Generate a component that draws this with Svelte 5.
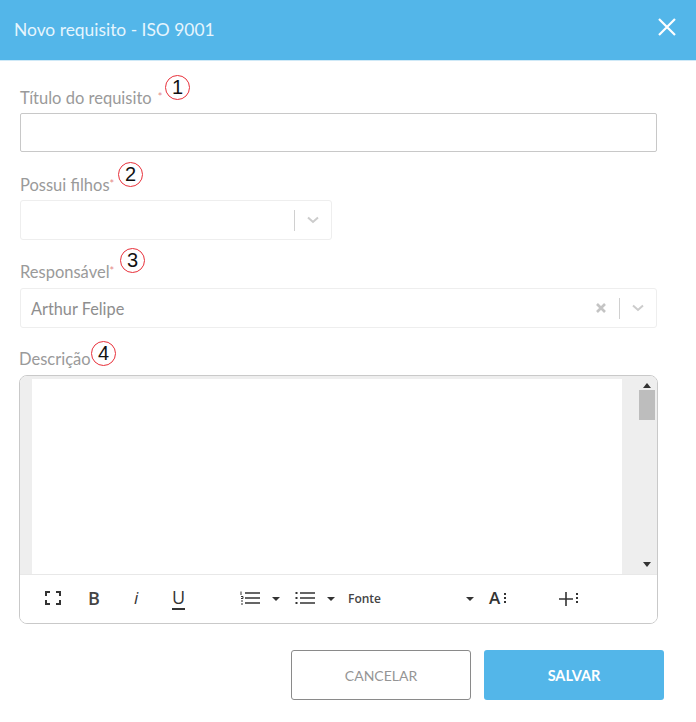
<script>
  let titulo = $state("");
  let numeros = { titulo: 1, filhos: 2, responsavel: 3, descricao: 4 };
</script>

<div class="modal">
  <header class="modal-header">
    <h1>Novo requisito - ISO 9001</h1>
    <svg class="close" width="20" height="20" viewBox="0 0 20 20">
      <path d="M2 2 L18 18 M18 2 L2 18" stroke="#fff" stroke-width="2.2" fill="none" />
    </svg>
  </header>

  <form class="modal-body">
    <div class="field">
      <label class="label l1" for="titulo">Título do requisito <span class="req">*</span><span class="badge b1">{numeros.titulo}</span></label>
      <input id="titulo" class="input" bind:value={titulo} />
    </div>

    <div class="field">
      <div class="label l2">Possui filhos<span class="req">*</span><span class="badge b2">{numeros.filhos}</span></div>
      <div class="select small">
        <span class="value"></span>
        <span class="sep"></span>
        <svg class="chev" width="12" height="8" viewBox="0 0 12 8"><path d="M1 1.5 L6 6 L11 1.5" fill="none" stroke="#ccc" stroke-width="2" /></svg>
      </div>
    </div>

    <div class="field">
      <div class="label l3">Responsável<span class="req">*</span><span class="badge b3">{numeros.responsavel}</span></div>
      <div class="select">
        <span class="value">Arthur Felipe</span>
        <svg class="clear" width="10" height="10" viewBox="0 0 10 10"><path d="M1 1 L9 9 M9 1 L1 9" stroke="#c4c4c4" stroke-width="2.6" fill="none" /></svg>
        <span class="sep"></span>
        <svg class="chev" width="12" height="8" viewBox="0 0 12 8"><path d="M1 1.5 L6 6 L11 1.5" fill="none" stroke="#ccc" stroke-width="2" /></svg>
      </div>
    </div>

    <div class="field desc">
      <div class="label l4">Descrição<span class="badge b4">{numeros.descricao}</span></div>
      <div class="editor">
        <div class="editor-area">
          <div class="gutter"></div>
          <div class="page"></div>
          <div class="scroll">
            <span class="arrow up"></span>
            <span class="thumb"></span>
            <span class="arrow down"></span>
          </div>
        </div>
        <div class="toolbar">
          <svg class="t-full" width="16" height="14" viewBox="0 0 16 14">
            <path d="M1 5 V1 H5 M11 1 H15 V5 M15 9 V13 H11 M5 13 H1 V9" fill="none" stroke="#333" stroke-width="2" />
          </svg>
          <span class="t-b">B</span>
          <span class="t-i">i</span>
          <span class="t-u">U</span>
          <svg class="t-ol" width="20" height="14" viewBox="0 0 20 14">
            <path d="M5 2 H20 M5 7 H20 M5 12 H20" stroke="#333" stroke-width="1.6" />
            <path d="M1 0.5 V4 M1 5.5 H3 V7.5 H1 M1 10 H3 M1 13 H3" stroke="#333" stroke-width="1" fill="none" />
          </svg>
          <span class="caret c1"></span>
          <svg class="t-ul" width="20" height="14" viewBox="0 0 20 14">
            <path d="M5 2 H20 M5 7 H20 M5 12 H20" stroke="#333" stroke-width="1.6" />
            <path d="M0.5 1 H2.5 V3 H0.5 Z M0.5 6 H2.5 V8 H0.5 Z M0.5 11 H2.5 V13 H0.5 Z" fill="#333" />
          </svg>
          <span class="caret c2"></span>
          <span class="t-font">Fonte</span>
          <span class="caret c3"></span>
          <span class="t-a">A</span>
          <svg class="dots" width="2" height="12" viewBox="0 0 2 12"><path d="M0 1 H2 V3 H0 Z M0 5 H2 V7 H0 Z M0 9 H2 V11 H0 Z" fill="#333" /></svg>
          <svg class="t-plus" width="14" height="14" viewBox="0 0 14 14"><path d="M0 7 H14 M7 0 V14" stroke="#333" stroke-width="1.6" /></svg>
          <svg class="dots d2" width="2" height="12" viewBox="0 0 2 12"><path d="M0 1 H2 V3 H0 Z M0 5 H2 V7 H0 Z M0 9 H2 V11 H0 Z" fill="#333" /></svg>
        </div>
      </div>
    </div>

    <div class="actions">
      <button type="button" class="btn cancel">CANCELAR</button>
      <button type="button" class="btn save">SALVAR</button>
    </div>
  </form>
</div>

<style>
  :global(body) {
    background: #fff;
  }

  .modal {
    width: 696px;
    height: 722px;
    background: #fff;
    font-family: Lato, "Open Sans", sans-serif;
    overflow: hidden;
  }

  .modal-header {
    height: 60px;
    background: #53b6e9;
    border-bottom: 1px solid #cfe9f7;
    box-sizing: content-box;
    display: flex;
    align-items: center;
    justify-content: space-between;
    padding: 0 19px 0 14px;
  }

  h1 {
    margin: -2px 0 0;
    font-size: 17.4px;
    font-weight: 400;
    color: #e6f5fd;
  }

  .close {
    margin-top: -7px;
  }

  .modal-body {
    padding: 0 39px 0 20px;
    display: flex;
    flex-direction: column;
  }

  .field {
    display: flex;
    flex-direction: column;
  }

  .label {
    position: relative;
    display: block;
    font-size: 16.5px;
    color: #9a9a9a;
  }

  .l1 { height: 52px; line-height: 71px; }
  .l2 { height: 48px; line-height: 63px; }
  .l3 { height: 48px; line-height: 62px; }
  .l4 { height: 47px; line-height: 63px; }

  .req {
    color: #e58a8a;
    font-size: 11px;
    vertical-align: 3px;
  }

  .l1 .req {
    margin-left: 2px;
  }

  .badge {
    position: absolute;
    width: 25px;
    height: 25px;
    box-sizing: border-box;
    border: 1.5px solid #e8303a;
    border-radius: 50%;
    background: #fff;
    color: #111;
    font: 20px/22px "Liberation Sans", sans-serif;
    text-align: center;
  }

  .b1 { left: 145px; top: 14px; }
  .b2 { left: 98px; top: 10px; }
  .b3 { left: 100px; top: 8px; }
  .b4 { left: 72px; top: 13px; }

  .input {
    width: 100%;
    height: 39px;
    box-sizing: border-box;
    border: 1px solid #c8c8c8;
    border-radius: 2px;
    outline: none;
    display: block;
  }

  .select {
    height: 40px;
    box-sizing: border-box;
    border: 1px solid #eee;
    border-radius: 3px;
    display: flex;
    align-items: center;
    padding: 0 12px 0 10px;
  }

  .select.small {
    width: 312px;
  }

  .value {
    flex: 1;
    font-size: 16.3px;
    color: #8e8e8e;
  }

  .clear {
    margin-right: 13px;
  }

  .sep {
    width: 1px;
    height: 21px;
    background: #d0d0d0;
    margin-right: 12px;
  }

  .desc {
    margin-left: -1px;
    width: 639px;
  }

  .editor {
    height: 249px;
    box-sizing: border-box;
    border: 1px solid #c9c9c9;
    border-radius: 8px;
    overflow: hidden;
    display: flex;
    flex-direction: column;
  }

  .editor-area {
    height: 199px;
    display: flex;
    background: #eeeeee;
    padding-top: 3px;
    box-sizing: border-box;
    border-bottom: 1px solid #e8e8e8;
  }

  .gutter {
    width: 12px;
  }

  .page {
    flex: 1;
    background: #fff;
  }

  .scroll {
    width: 35px;
    position: relative;
    display: flex;
    flex-direction: column;
    align-items: center;
    padding-left: 14px;
    box-sizing: border-box;
  }

  .arrow {
    width: 0;
    height: 0;
    border-left: 4px solid transparent;
    border-right: 4px solid transparent;
  }

  .arrow.up {
    border-bottom: 5px solid #333;
    margin-top: 4px;
  }

  .arrow.down {
    border-top: 5px solid #333;
    margin-top: auto;
    margin-bottom: 7px;
  }

  .thumb {
    width: 16px;
    height: 30px;
    background: #bdbdbd;
    margin-top: 2px;
  }

  .toolbar {
    flex: 1;
    position: relative;
    background: #fff;
    color: #333;
  }

  .toolbar > * {
    position: absolute;
  }

  .t-full { left: 25px; top: 16px; }
  .t-b { left: 68px; top: 11px; font: 600 18px/24px "Open Sans", sans-serif; color: #444; }
  .t-i { left: 114px; top: 11px; font: italic 400 17px/24px "Open Sans", sans-serif; }
  .t-u { left: 152px; top: 11px; font: 400 18px/22px "Open Sans", sans-serif; border-bottom: 2px solid #333; height: 22px; }
  .t-ol { left: 220px; top: 16px; }
  .c1 { left: 252px; }
  .t-ul { left: 275px; top: 16px; }
  .c2 { left: 307px; }
  .t-font { left: 328px; top: 12px; font: 600 12px/24px "Open Sans", sans-serif; color: #444; }
  .c3 { left: 446px; }
  .t-a { left: 469px; top: 11px; font: 600 17px/24px "Open Sans", sans-serif; }
  .dots { left: 484px; top: 17px; }
  .t-plus { left: 539px; top: 17px; }
  .d2 { left: 556px; top: 17px; }

  .caret {
    top: 22px;
    width: 0;
    height: 0;
    border-left: 4px solid transparent;
    border-right: 4px solid transparent;
    border-top: 4px solid #333;
  }

  .actions {
    display: flex;
    justify-content: flex-end;
    gap: 13px;
    margin-top: 26px;
    margin-right: -7px;
  }

  .btn {
    width: 180px;
    height: 50px;
    border-radius: 3px;
    font-family: Lato, sans-serif;
  }

  .cancel {
    background: #fff;
    border: 1px solid #8a8a8a;
    color: #959595;
    font-size: 14px;
  }

  .save {
    background: #53b6e9;
    border: none;
    color: #fff;
    font-size: 14.5px;
    font-weight: 700;
  }
</style>
